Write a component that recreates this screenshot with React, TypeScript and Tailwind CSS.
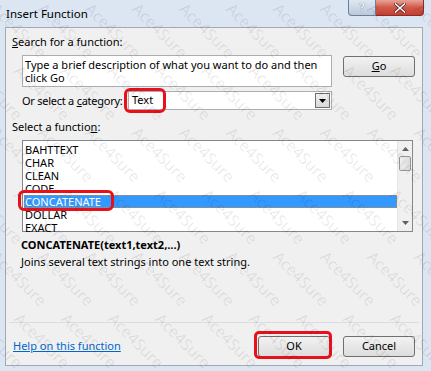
import React from "react";

const functions = ["BAHTTEXT", "CHAR", "CLEAN", "CODE", "CONCATENATE", "DOLLAR", "EXACT"];

function Watermark() {
  const marks: { x: number; y: number }[] = [];
  for (let row = -2; row < 7; row++) {
    for (let col = -2; col < 11; col++) {
      marks.push({ x: col * 47 + (row % 2) * 23, y: row * 62 });
    }
  }
  return (
    <div className="pointer-events-none absolute inset-0 overflow-hidden">
      {marks.map((m, i) => (
        <span
          key={i}
          className="absolute origin-top-left rotate-45 text-[16px] leading-none text-black/[0.09] whitespace-nowrap"
          style={{ left: m.x, top: m.y }}
        >
          Ace4Sure
        </span>
      ))}
    </div>
  );
}

function Button({ children, className = "" }: { children: React.ReactNode; className?: string }) {
  return (
    <div
      className={`flex h-[21px] w-[72px] items-center justify-center rounded-[3px] border border-[#707070] bg-gradient-to-b from-[#f2f2f2] to-[#dddddd] text-[11px] text-black ${className}`}
    >
      {children}
    </div>
  );
}

export default function App() {
  return (
    <div
      className="relative flex h-[371px] w-[431px] flex-col overflow-hidden bg-[#dbe6f2] text-[11px] text-black"
      style={{ fontFamily: '"Noto Sans", sans-serif' }}
    >
      {/* title bar */}
      <div className="flex h-[27px] shrink-0 items-start">
        <div className="pl-[6px] pt-[5px] text-[11.5px]">Insert Function</div>
        <div className="ml-auto mr-[7px] flex">
          <div className="flex h-[16px] w-[28px] items-center justify-center rounded-bl-[4px] border border-t-0 border-[#6d7f95] bg-gradient-to-b from-[#dfe8f2] to-[#b9c9dc] text-[11px] font-bold text-[#f4f7fb] [text-shadow:0_0_1px_#3b4d63]">
            ?
          </div>
          <div className="flex h-[16px] w-[48px] items-center justify-center rounded-br-[4px] border border-l-0 border-t-0 border-[#8a2e2a] bg-gradient-to-b from-[#e8a297] via-[#d0584a] to-[#c4402f]">
            <svg width="12" height="10" viewBox="0 0 12 10">
              <path d="M1.5 1 L10.5 9 M10.5 1 L1.5 9" stroke="#4a1c18" strokeWidth="3" strokeLinecap="square" />
              <path d="M1.5 1 L10.5 9 M10.5 1 L1.5 9" stroke="#ffffff" strokeWidth="1.6" strokeLinecap="square" />
            </svg>
          </div>
        </div>
      </div>

      {/* client area */}
      <div className="mb-[5px] ml-[5px] mr-[8px] flex flex-1 flex-col border border-[#a0aab6] bg-[#f0f0f0]">
        <div className="pl-[6px] pt-[7px] leading-[14px]">
          <span className="underline">S</span>earch for a function:
        </div>

        <div className="mt-[6px] flex items-start pl-[16px]">
          <div className="h-[32px] w-[310px] border border-[#abadb3] bg-white px-[2px] pt-[2px] leading-[13px]">
            Type a brief description of what you want to do and then click Go
          </div>
          <Button className="ml-[11px] mt-[1px]">
            <span>
              <span className="underline">G</span>o
            </span>
          </Button>
        </div>

        <div className="mt-[4px] flex items-center pl-[16px]">
          <div className="w-[106px] whitespace-nowrap leading-[14px] tracking-[-0.25px]">
            Or select a <span className="underline">c</span>ategory:
          </div>
          <div className="relative flex h-[19px] w-[204px] items-center border border-[#abadb3] bg-white pl-[3px]">
            <span>Text</span>
            <div className="ml-auto mr-[1px] flex h-[15px] w-[15px] items-center justify-center border border-[#707070] bg-gradient-to-b from-[#f2f2f2] to-[#d8d8d8]">
              <svg width="7" height="4" viewBox="0 0 7 4">
                <path d="M0 0 H7 L3.5 4 Z" fill="#000" />
              </svg>
            </div>
            <div className="pointer-events-none absolute left-[-5px] top-[-4px] h-[25px] w-[42px] rounded-[6px] border-[3px] border-[#e8101b]" />
          </div>
        </div>

        <div className="pl-[6px] pt-[10px] leading-[14px]">
          Select a functio<span className="underline">n</span>:
        </div>

        <div className="relative ml-[16px] mt-[6px] flex h-[92px] w-[391px] border border-[#828790] bg-white">
          <div className="flex-1 pl-[1px] pt-[2px]">
            {functions.map((f) => (
              <div
                key={f}
                className={`h-[13px] pl-[1px] text-[11px] leading-[13px] ${
                  f === "CONCATENATE" ? "bg-[#3399ff] text-white outline outline-1 outline-dotted outline-[#cc8a3a] -outline-offset-1" : ""
                }`}
              >
                {f}
              </div>
            ))}
          </div>
          <div className="flex w-[15px] flex-col items-center border-l border-[#e6e6e6] bg-[#f0f0f0]">
            <svg className="mt-[6px]" width="7" height="4" viewBox="0 0 7 4">
              <path d="M3.5 0 L7 4 H0 Z" fill="#606060" />
            </svg>
            <div className="mt-[5px] h-[15px] w-[12px] rounded-[2px] border border-[#979797] bg-gradient-to-r from-[#f0f0f0] to-[#dadada]" />
            <svg className="mb-[6px] mt-auto" width="7" height="4" viewBox="0 0 7 4">
              <path d="M0 0 H7 L3.5 4 Z" fill="#606060" />
            </svg>
          </div>
          <div className="pointer-events-none absolute left-[-5px] top-[49px] h-[21px] w-[96px] rounded-[6px] border-[3px] border-[#e8101b]" />
        </div>

        <div className="pl-[15px] pt-[6px] font-bold leading-[14px]">CONCATENATE(text1,text2,...)</div>
        <div className="pl-[15px] pt-[3px] leading-[14px]">Joins several text strings into one text string.</div>

        <div className="mx-[3px] mt-auto border-t border-[#d9dde2]" />

        <div className="flex items-center pb-[8px] pl-[7px] pt-[13px]">
          <span className="text-[#0066cc] underline">Help on this function</span>
          <div className="relative ml-auto">
            <Button className="w-[71px]">OK</Button>
            <div className="pointer-events-none absolute left-[-4px] top-[-5px] h-[28px] w-[78px] rounded-[5px] border-[3px] border-[#e8101b]" />
          </div>
          <Button className="ml-[13px] mr-[7px]">Cancel</Button>
        </div>
      </div>
      <Watermark />
    </div>
  );
}
